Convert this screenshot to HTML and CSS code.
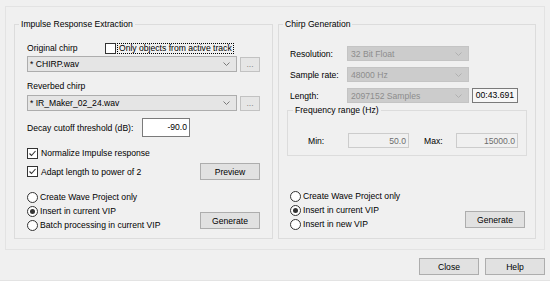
FILE: index.html
```html
<!DOCTYPE html>
<html lang="en">
<head>
    <meta charset="UTF-8">
    <title>Impulse Response</title>
    <link rel="stylesheet" href="styles.css">
</head>
<body>
    <div class="dialog">
        <div class="panel">
            <fieldset class="group group-left">
                <legend>Impulse Response Extraction</legend>
                <div class="lbody">
                    <div class="row row-top">
                        <span class="label label-chirp">Original chirp</span>
                        <span class="check"></span>
                        <span class="focus">Only objects from active track</span>
                    </div>
                    <div class="row row-combo">
                        <div class="combo"><span>* CHIRP.wav</span><svg class="chev" width="7" height="4" viewBox="0 0 7 4"><polyline points="0.5,0.5 3.5,3.5 6.5,0.5" fill="none" stroke="#7a7a7a" stroke-width="1"/></svg></div>
                        <button class="btn btn-dots">...</button>
                    </div>
                    <div class="row row-label2"><span class="label">Reverbed chirp</span></div>
                    <div class="row row-combo2">
                        <div class="combo"><span>* IR_Maker_02_24.wav</span><svg class="chev" width="7" height="4" viewBox="0 0 7 4"><polyline points="0.5,0.5 3.5,3.5 6.5,0.5" fill="none" stroke="#7a7a7a" stroke-width="1"/></svg></div>
                        <button class="btn btn-dots">...</button>
                    </div>
                    <div class="row row-decay">
                        <span class="label label-decay">Decay cutoff threshold (dB):</span>
                        <div class="input">-90.0</div>
                    </div>
                    <div class="row row-norm">
                        <span class="check checked"><svg width="9" height="9" viewBox="0 0 9 9"><polyline points="1.5,4.5 3.5,6.5 7.5,2" fill="none" stroke="#333" stroke-width="1.1"/></svg></span>
                        <span class="opt">Normalize Impulse response</span>
                    </div>
                    <div class="row row-adapt">
                        <span class="check checked"><svg width="9" height="9" viewBox="0 0 9 9"><polyline points="1.5,4.5 3.5,6.5 7.5,2" fill="none" stroke="#333" stroke-width="1.1"/></svg></span>
                        <span class="opt">Adapt length to power of 2</span>
                        <button class="btn btn-push">Preview</button>
                    </div>
                    <div class="row row-bottom">
                        <div class="radios">
                            <div class="radio-row"><span class="radio"></span><span class="opt">Create Wave Project only</span></div>
                            <div class="radio-row"><span class="radio on"></span><span class="opt">Insert in current VIP</span></div>
                            <div class="radio-row"><span class="radio"></span><span class="opt">Batch processing in current VIP</span></div>
                        </div>
                        <button class="btn btn-push btn-gen">Generate</button>
                    </div>
                </div>
            </fieldset>
            <fieldset class="group group-right">
                <legend>Chirp Generation</legend>
                <div class="rbody">
                    <div class="row row-param row-res">
                        <span class="label label-param">Resolution:</span>
                        <div class="combo combo-off"><span>32 Bit Float</span><svg class="chev" width="7" height="4" viewBox="0 0 7 4"><polyline points="0.5,0.5 3.5,3.5 6.5,0.5" fill="none" stroke="#b0b0b0" stroke-width="1"/></svg></div>
                    </div>
                    <div class="row row-param">
                        <span class="label label-param">Sample rate:</span>
                        <div class="combo combo-off"><span>48000 Hz</span><svg class="chev" width="7" height="4" viewBox="0 0 7 4"><polyline points="0.5,0.5 3.5,3.5 6.5,0.5" fill="none" stroke="#b0b0b0" stroke-width="1"/></svg></div>
                    </div>
                    <div class="row row-param">
                        <span class="label label-param">Length:</span>
                        <div class="combo combo-off"><span>2097152 Samples</span><svg class="chev" width="7" height="4" viewBox="0 0 7 4"><polyline points="0.5,0.5 3.5,3.5 6.5,0.5" fill="none" stroke="#b0b0b0" stroke-width="1"/></svg></div>
                        <div class="readout">00:43.691</div>
                    </div>
                    <fieldset class="group group-freq">
                        <legend>Frequency range (Hz)</legend>
                        <div class="row row-range">
                            <span class="label label-min">Min:</span>
                            <div class="input input-off input-min">50.0</div>
                            <span class="label label-max">Max:</span>
                            <div class="input input-off input-max">15000.0</div>
                        </div>
                    </fieldset>
                    <div class="row row-bottom row-bottom-r">
                        <div class="radios">
                            <div class="radio-row"><span class="radio"></span><span class="opt">Create Wave Project only</span></div>
                            <div class="radio-row"><span class="radio on"></span><span class="opt">Insert in current VIP</span></div>
                            <div class="radio-row"><span class="radio"></span><span class="opt">Insert in new VIP</span></div>
                        </div>
                        <button class="btn btn-push btn-gen">Generate</button>
                    </div>
                </div>
            </fieldset>
        </div>
        <div class="actions">
            <button class="btn btn-push">Close</button>
            <button class="btn btn-push">Help</button>
        </div>
    </div>
</body>
</html>
```

FILE: styles.css
```css
body {
    margin: 0;
    background-color: #f0f0f0;
    font-family: "Liberation Sans", Arial, sans-serif;
    font-size: 8.6px;
    color: #000;
}
.dialog {
    width: 550px;
    height: 281px;
    box-sizing: border-box;
    border-bottom: 1px solid #e3e3e3;
    display: flex;
    flex-direction: column;
}
.panel {
    margin: 6px 5px 0 5px;
    height: 244px;
    box-sizing: border-box;
    border: 1px solid #e3e3e3;
    padding: 11px 8px 10px 8px;
    display: flex;
    gap: 5px;
}
.group {
    margin: 0;
    padding: 0;
    border: 1px solid #dcdcdc;
    min-width: 0;
}
.group legend {
    margin-left: 4px;
    padding: 0 2px;
    line-height: 13px;
}
.group-left {
    flex: 0 0 259px;
    box-sizing: border-box;
}
.group-right {
    flex: 1;
}
.lbody {
    padding: 0 12px;
}
.rbody {
    padding: 0 0 0 11px;
}
.row {
    display: flex;
    align-items: center;
}
.label {
    white-space: nowrap;
}
.row-top {
    margin-top: 11px;
    height: 12px;
}
.label-chirp {
    width: 78px;
}
.focus {
    margin-left: 2px;
    padding: 0 1px;
    line-height: 9px;
    outline: 1px dotted #000;
}
.row-combo {
    margin-top: 2px;
    height: 16px;
}
.row-label2 {
    margin-top: 8px;
    height: 12px;
}
.row-combo2 {
    margin-top: 3px;
    height: 16px;
}
.combo {
    width: 210px;
    height: 16px;
    box-sizing: border-box;
    border: 1px solid #adadad;
    background-color: #e5e5e5;
    display: flex;
    align-items: center;
    justify-content: space-between;
    padding: 0 6px 0 2px;
}
.combo-off {
    width: 122px;
    height: 15px;
    background-color: #cccccc;
    border-color: #c4c4c4;
    color: #8d8d8d;
    padding-left: 3px;
}
.btn {
    font-family: inherit;
    font-size: inherit;
    color: #000;
    background-color: #e1e1e1;
    border: 1px solid #adadad;
    border-radius: 0;
    padding: 0;
    margin: 0;
}
.btn-dots {
    width: 20px;
    height: 15px;
    margin-left: 3px;
    align-self: flex-end;
    color: #8a8a8a;
    border-color: #c2c2c2;
    background-color: #e6e6e6;
    line-height: 11px;
}
.btn-push {
    width: 60px;
    height: 17px;
}
.row-decay {
    margin-top: 7px;
    height: 19px;
}
.label-decay {
    width: 115px;
}
.input {
    width: 48px;
    height: 19px;
    box-sizing: border-box;
    border: 1px solid #7a7a7a;
    background-color: #fff;
    text-align: right;
    padding: 2px 2px 0 0;
    line-height: 12px;
}
.row-norm {
    margin-top: 10px;
    height: 12px;
}
.row-adapt {
    margin-top: 4px;
    height: 17px;
}
.row-adapt .btn-push {
    margin-left: auto;
}
.check {
    width: 11px;
    height: 11px;
    box-sizing: border-box;
    border: 1px solid #333;
    background-color: #fff;
    display: flex;
    align-items: center;
    justify-content: center;
    flex: none;
}
.opt {
    margin-left: 3px;
    white-space: nowrap;
}
.row-bottom {
    margin-top: 10px;
    align-items: flex-start;
}
.radios {
    display: flex;
    flex-direction: column;
}
.radio-row {
    display: flex;
    align-items: center;
    height: 14px;
}
.radio {
    width: 11px;
    height: 11px;
    box-sizing: border-box;
    border: 1px solid #333;
    border-radius: 50%;
    background-color: #fff;
    display: flex;
    align-items: center;
    justify-content: center;
    flex: none;
}
.radio.on::after {
    content: "";
    width: 5px;
    height: 5px;
    border-radius: 50%;
    background-color: #333;
}
.radio-row .opt {
    margin-left: 2px;
}
.btn-gen {
    margin-left: auto;
    margin-top: 22px;
}
.row-param {
    height: 15px;
    margin-top: 6px;
}
.row-res {
    margin-top: 15px;
}
.label-param {
    width: 57px;
}
.readout {
    width: 46px;
    height: 15px;
    box-sizing: border-box;
    margin-left: 3px;
    border: 1px solid #7a7a7a;
    background-color: #f7f7f7;
    text-align: right;
    padding-right: 3px;
    line-height: 13px;
}
.group-freq {
    margin: 1px 0 0 -3px;
    width: 240px;
    box-sizing: border-box;
    padding: 0 0 7px 0;
}
.group-freq legend {
    margin-left: 5px;
}
.row-range {
    margin-top: 16px;
    padding-left: 20px;
    height: 15px;
}
.label-min {
    width: 40px;
}
.label-max {
    width: 32px;
    margin-left: 15px;
}
.input-off {
    height: 15px;
    padding-top: 1px;
    border-color: #cccccc;
    background-color: #f0f0f0;
    color: #6d6d6d;
}
.input-min {
    width: 61px;
}
.input-max {
    width: 62px;
}
.row-bottom-r {
    margin-top: 33px;
    padding-right: 10px;
}
.actions {
    margin-top: 8px;
    padding-right: 5px;
    display: flex;
    justify-content: flex-end;
    gap: 6px;
}
```
